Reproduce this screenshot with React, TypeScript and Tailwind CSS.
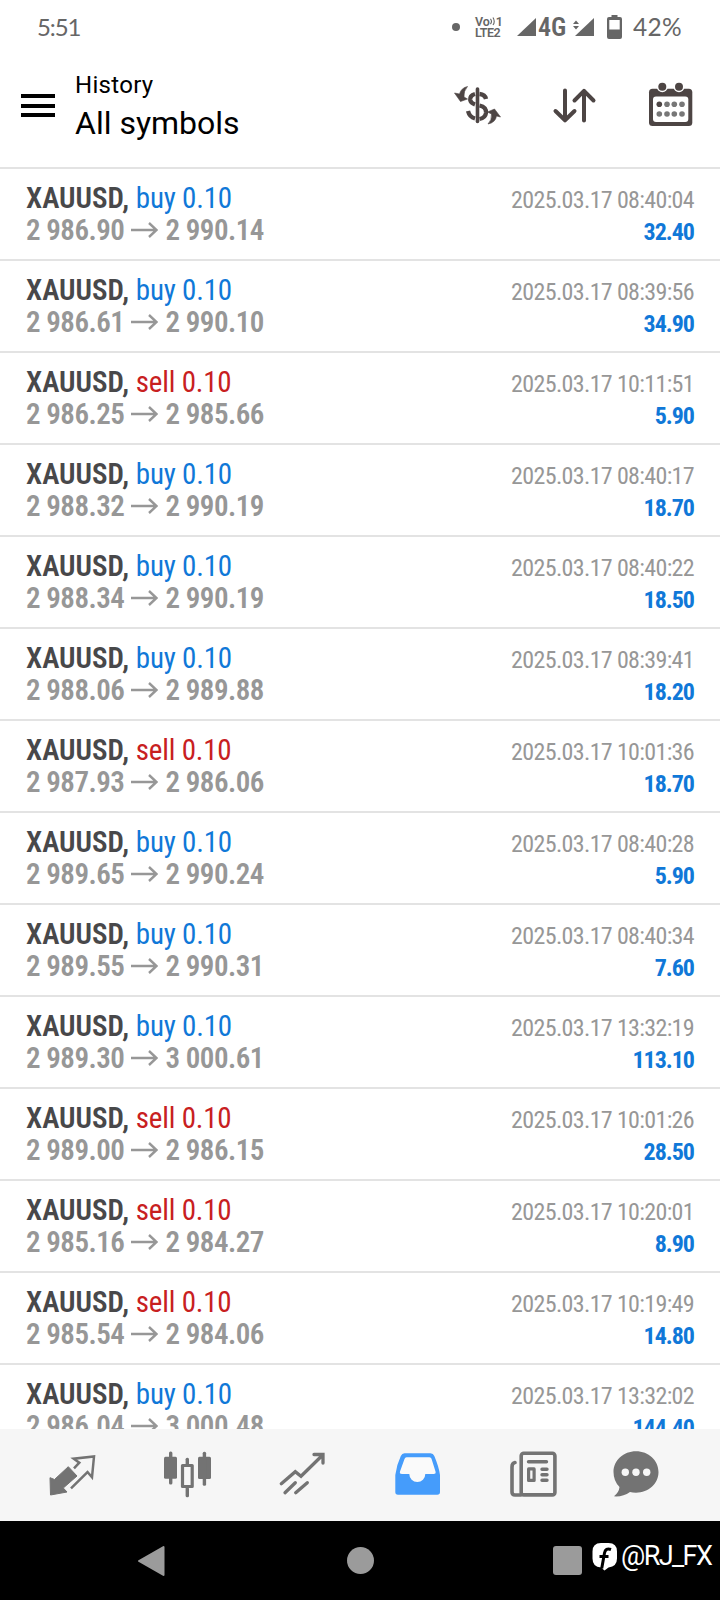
import React from 'react';

interface Deal {
  side: 'buy' | 'sell';
  open: string;
  close: string;
  time: string;
  profit: string;
}

const deals: Deal[] = [
  { side: 'buy', open: '2 986.90', close: '2 990.14', time: '2025.03.17 08:40:04', profit: '32.40' },
  { side: 'buy', open: '2 986.61', close: '2 990.10', time: '2025.03.17 08:39:56', profit: '34.90' },
  { side: 'sell', open: '2 986.25', close: '2 985.66', time: '2025.03.17 10:11:51', profit: '5.90' },
  { side: 'buy', open: '2 988.32', close: '2 990.19', time: '2025.03.17 08:40:17', profit: '18.70' },
  { side: 'buy', open: '2 988.34', close: '2 990.19', time: '2025.03.17 08:40:22', profit: '18.50' },
  { side: 'buy', open: '2 988.06', close: '2 989.88', time: '2025.03.17 08:39:41', profit: '18.20' },
  { side: 'sell', open: '2 987.93', close: '2 986.06', time: '2025.03.17 10:01:36', profit: '18.70' },
  { side: 'buy', open: '2 989.65', close: '2 990.24', time: '2025.03.17 08:40:28', profit: '5.90' },
  { side: 'buy', open: '2 989.55', close: '2 990.31', time: '2025.03.17 08:40:34', profit: '7.60' },
  { side: 'buy', open: '2 989.30', close: '3 000.61', time: '2025.03.17 13:32:19', profit: '113.10' },
  { side: 'sell', open: '2 989.00', close: '2 986.15', time: '2025.03.17 10:01:26', profit: '28.50' },
  { side: 'sell', open: '2 985.16', close: '2 984.27', time: '2025.03.17 10:20:01', profit: '8.90' },
  { side: 'sell', open: '2 985.54', close: '2 984.06', time: '2025.03.17 10:19:49', profit: '14.80' },
  { side: 'buy', open: '2 986.04', close: '3 000.48', time: '2025.03.17 13:32:02', profit: '144.40' },
];

export default function App() {
  return (
    <div className="relative flex h-[1600px] w-[720px] flex-col overflow-hidden bg-white font-['Roboto',sans-serif]">
      <StatusBar />
      <Header />

      <main className="h-[1262px] shrink-0 overflow-hidden">
        {deals.map((deal, i) => (
          <DealRow key={i} deal={deal} />
        ))}
      </main>

      <TabBar />
      <SystemNav />
    </div>
  );
}

const StatusBar = () => (
  <div className="flex h-[54px] shrink-0 items-center pl-[37px] text-[#666]">
    <span className="w-[415px] font-['Lato',sans-serif] text-[24px] leading-[54px] tracking-[-1.1px]">5:51</span>
    <span className="h-2 w-2 rounded-full bg-[#666]" />
    <span className="ml-[15px] flex w-[28px] flex-col text-[12.5px] leading-[11px] font-semibold">
      <span className="flex items-center whitespace-nowrap">
        Vo
        <svg className="h-[11px] w-[7px]" viewBox="0 0 7 11" fill="none" stroke="#666" strokeWidth="1.300">
          <path d="M.5 2.500q2.500 3 0 6M3.500.8q3 4.700 0 8.900" />
        </svg>
        1
      </span>
      <span className="whitespace-nowrap tracking-[-0.5px]">LTE2</span>
    </span>
    <svg className="ml-[14px] h-[18px] w-[19px]" viewBox="0 0 19 18">
      <path d="M19 0v18H0z" fill="#666" />
    </svg>
    <span className="ml-[2px] w-[29px] text-[26px] leading-[54px] font-semibold [font-stretch:75%]">4G</span>
    <svg className="ml-[6px] h-[18px] w-[21px]" viewBox="0 0 21 18">
      <path d="M21 0v18H2z" fill="#666" />
      <path d="M0 6l3-3.500L6 6zM0 8h6l-3 3.500z" fill="#666" />
    </svg>
    <svg className="ml-[13px] h-[24px] w-[15px]" viewBox="0 0 15 24">
      <path d="M4.500 0h6v2H13a2 2 0 0 1 2 2v18a2 2 0 0 1-2 2H2a2 2 0 0 1-2-2V4a2 2 0 0 1 2-2h2.500z" fill="#666" />
      <path d="M2.300 5h10.400v9.500H2.300z" fill="#fff" />
    </svg>
    <span className="ml-[11px] font-['Lato',sans-serif] text-[24.5px] leading-[54px] tracking-[0.3px]">42%</span>
  </div>
);

const Header = () => (
  <header className="flex h-[113px] shrink-0 pl-[21px]">
    <div className="mt-[40px] flex h-[23px] w-[34px] flex-col justify-between">
      <span className="h-1 bg-black" />
      <span className="h-1 bg-black" />
      <span className="h-1 bg-black" />
    </div>
    <div className="mt-[14px] ml-[20px] w-[378px] text-black">
      <p className="text-[24px] leading-[34px] tracking-[0.3px]">History</p>
      <p className="text-[32px] leading-[42px]">All symbols</p>
    </div>
    <div className="mt-[26px] flex gap-[49px]">
      <CurrencyIcon />
      <SortIcon />
      <CalendarIcon />
    </div>
  </header>
);

const DealRow = ({ deal }: { deal: Deal }) => (
  <div className="flex h-[92px] justify-between border-t-2 border-[#e3e3e3] pr-[26px] pl-[26px] whitespace-nowrap [font-stretch:75%]">
    <div className="pt-[13px] text-[29px] leading-[32px]">
      <p>
        <span className="font-semibold text-[#48484a]">XAUUSD,</span>{' '}
        <span className={deal.side === 'buy' ? 'tracking-[-0.2px] text-[#1078d8]' : 'tracking-[-0.2px] text-[#c8201f]'}>
          {deal.side} 0.10
        </span>
      </p>
      <p className="flex items-center font-semibold tracking-[-0.5px] text-[#979797]">
        <span>{deal.open}</span>
        <svg className="mr-[7px] ml-[7px] h-[16px] w-[27px]" viewBox="0 0 27 16" fill="none" stroke="#979797" strokeWidth="2.400">
          <path d="M0 8h26M18 1l7.500 7-7.500 7" />
        </svg>
        <span>{deal.close}</span>
      </p>
    </div>
    <div className="pt-[15px] text-right text-[24px] leading-[32px]">
      <p className="tracking-[-0.65px] text-[#979797]">{deal.time}</p>
      <p className="font-bold tracking-[-1px] text-[#1078d8]">{deal.profit}</p>
    </div>
  </div>
);

const TabBar = () => (
  <nav className="flex h-[92px] shrink-0 gap-[67px] bg-[#f6f6f6] pt-[22px] pl-[48px]">
    <svg className="h-12 w-12 shrink-0" viewBox="0 0 48 48">
      <path d="M2 26.700l4.500 1.800L20.300 15.700 29 25 15.300 37l3.700 4L2.500 44z" fill="#737373" stroke="#737373" strokeLinejoin="round" />
      <path d="M26 17.300l5.300-5.600-5.600-4 20.300-2.200-2 20.800-4.500-5.300L23 37.300" fill="none" stroke="#737373" strokeWidth="2.500" />
    </svg>
    <svg className="h-12 w-12 shrink-0" viewBox="0 0 48 48" fill="#737373">
      <rect x="1" y="5.700" width="13" height="22" rx="1.500" />
      <rect x="6" y="0.500" width="3.400" height="33" rx="1.500" />
      <rect x="19.500" y="14.500" width="9.700" height="21" fill="none" stroke="#737373" strokeWidth="3.200" strokeLinejoin="round" />
      <rect x="22.600" y="6.700" width="3.400" height="7" rx="1.500" />
      <rect x="22.600" y="36" width="3.400" height="10.300" rx="1.500" />
      <rect x="35" y="5.700" width="13" height="22.300" rx="1.500" />
      <rect x="39.700" y="0.700" width="3.400" height="34" rx="1.500" />
    </svg>
    <svg className="h-12 w-12 shrink-0" viewBox="0 0 48 48" fill="none" stroke="#737373" strokeWidth="3.300" strokeLinecap="round">
      <path d="M3.300 32.700l14-12 5.700 4.600L44.700 4M36 3.500h9V12M7 41.700l10.300-10M17.700 41.700l11.600-10" />
    </svg>
    <svg className="h-12 w-12 shrink-0" viewBox="0 0 48 48">
      <path d="M11.500 2.300h26q2.800 0 3.800 2.600Q46 16 47 24v17q0 2.700-2.700 2.700H5q-2.700 0-2.700-2.700V24Q3.500 14 7.800 4.900 9 2.300 11.500 2.300z" fill="#459cfb" />
      <path d="M13.500 6.300h23q1.500 0 2 1.500l4 12.700q.7 2.500-2 2.500h-8.200a8 8 0 0 1-16 0H9q-2.700 0-2-2.500L11.500 8q.6-1.700 2-1.700z" fill="#fafafa" />
    </svg>
    <svg className="ml-px h-12 w-12 shrink-0" viewBox="0 0 48 48" fill="none" stroke="#737373" strokeWidth="3.600" strokeLinecap="round">
      <rect x="12.200" y="2.200" width="33.700" height="41.700" rx="2.500" />
      <path d="M6 11.500Q3 12 3 16v25q0 3 3 3h6" />
      <path d="M19.500 10.700h18M33 18.300h5M33 23.800h5M33 29.300h5" strokeWidth="3.400" />
      <rect x="19.600" y="17.900" width="5.500" height="11.500" strokeWidth="3.200" strokeLinejoin="round" />
    </svg>
    <svg className="-ml-[13px] h-12 w-12 shrink-0" viewBox="0 0 48 48">
      <path d="M25 .3c12.500 0 22.500 9 22.500 20.700S37.500 41.700 25 41.700q-3.500 0-6-.8Q12 46 3 45.300q5-4 5.500-9.300Q2.500 30 2.500 21C2.500 9.300 12.500.3 25 .3z" fill="#737373" />
      <circle cx="14.300" cy="21.300" r="3.700" fill="#f6f6f6" />
      <circle cx="25" cy="21.300" r="3.700" fill="#f6f6f6" />
      <circle cx="35.700" cy="21.300" r="3.700" fill="#f6f6f6" />
    </svg>
  </nav>
);

const SystemNav = () => (
  <div className="relative flex h-[79px] shrink-0 items-center bg-black pl-[138px]">
    <svg className="h-[32px] w-[27px]" viewBox="0 0 27 32">
      <path d="M1 16L25.500 2v28z" fill="#9b9b9b" stroke="#9b9b9b" strokeWidth="2" strokeLinejoin="round" />
    </svg>
    <span className="ml-[182px] h-[27px] w-[27px] rounded-full bg-[#9b9b9b]" />
    <span className="ml-[179px] h-[29px] w-[29px] rounded-[3px] bg-[#9b9b9b]" />

    {/* Watermark */}
    <div className="absolute top-[20px] left-[592px] flex items-center text-white">
      <svg className="h-[30px] w-[26px]" viewBox="0 0 26 30">
        <path d="M9 2h7.500q8.500 0 8.500 8.500v7q0 8-8.500 9L12.500 29.500 9 26.500Q.5 26 .5 17.500v-7Q.5 2 9 2z" fill="#fff" />
        <path d="M19 8.500q-5.500-2-6.500 3.500L9.700 27.500M7.500 15.500h9" fill="none" stroke="#000" strokeWidth="3" />
      </svg>
      <span className="ml-[3px] text-[27px] leading-[30px] tracking-[-1.6px]">@RJ_FX</span>
    </div>
  </div>
);

const CurrencyIcon = () => (
  <svg className="h-12 w-12" viewBox="0 0 48 48" fill="none" stroke="#4d4544" strokeWidth="4.300">
    <path d="M24.500 9v32.500" strokeWidth="3.600" strokeLinecap="round" />
    <path d="M22 14q-5.300 1.500-4.800 6 .5 3 4.800 4.500M26.500 14q5.500.5 6.500 5M26.500 25.500q7 1.500 6.500 7.500-.7 5-6.500 6M15 31q1.500 6 7 7.500" />
    <path d="M14.500 6.500Q8 8 6.500 14L1.500 13l6 8.500 7-2.500-3.500-2q-.5-6 3.500-10.500zM35 44q7.500-1.500 8.500-8l4 1-6-8-7 3 4 2q.5 6-3.500 10z" fill="#4d4544" stroke="#4d4544" strokeWidth="0.600" />
  </svg>
);

const SortIcon = () => (
  <svg className="h-12 w-12" viewBox="0 0 48 48" fill="none" stroke="#4d4544" strokeWidth="4" strokeLinecap="round" strokeLinejoin="round">
    <path d="M15 10.500V40M5.500 31L15 40.300 24.500 31M34 40.500V11M24.500 20.500L34 10.800l9.500 9.700" />
  </svg>
);

const CalendarIcon = () => (
  <svg className="h-12 w-12" viewBox="0 0 48 48">
    <rect x="2" y="8.700" width="43.300" height="37.300" rx="3.500" fill="#4d4544" />
    <rect x="6" y="16.500" width="35.300" height="25.500" rx="3" fill="#fff" />
    {[15.3, 32].map((x) => (
      <g key={x}>
        <circle cx={x} cy="6.700" r="5.500" fill="#fff" />
        <circle cx={x} cy="6.700" r="4" fill="#4d4544" />
      </g>
    ))}
    {[24.3, 34].map((y) =>
      [12.3, 20, 27.3, 35].map((x) => (
        <circle key={`${x}-${y}`} cx={x} cy={y} r="2.800" fill={x < 15 && y < 30 ? '#4d4544' : '#777'} />
      ))
    )}
  </svg>
);
